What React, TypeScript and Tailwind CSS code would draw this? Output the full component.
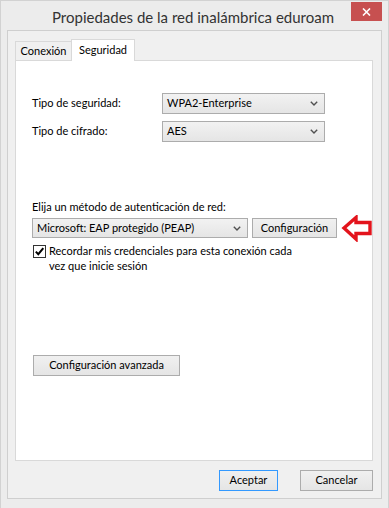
import React from "react";

function Chevron() {
  return (
    <svg width="8" height="5" viewBox="0 0 8 5" className="shrink-0">
      <path d="M0.8 0.8 L4 4 L7.2 0.8" fill="none" stroke="#505050" strokeWidth="1.4" />
    </svg>
  );
}

function Combo({ text, className }: { text: string; className: string }) {
  return (
    <div
      className={
        "flex items-center justify-between border border-[#acacac] bg-gradient-to-b from-[#f2f2f2] to-[#e5e5e5] pl-[4px] pr-[6px] " +
        className
      }
    >
      <span>{text}</span>
      <Chevron />
    </div>
  );
}

export default function App() {
  return (
    <div
      className="w-[389px] h-[508px] flex flex-col bg-[#ececec] border-l border-t border-r border-[#d2d2d2] text-[11px] text-black overflow-hidden"
      style={{ fontFamily: "Lato, 'Liberation Sans', sans-serif" }}
    >
      {/* Title bar */}
      <div className="relative h-[29px] flex items-center justify-center shrink-0">
        <span className="text-[15px] text-[#333333] mt-[3px] ml-[-3px]">
          Propiedades de la red inalámbrica eduroam
        </span>
        <div className="absolute right-[6px] top-[1px] w-[31px] h-[19px] bg-[#c75050] flex items-center justify-center">
          <svg width="9" height="8" viewBox="0 0 9 8">
            <path d="M1 0.5 L8 7.5 M8 0.5 L1 7.5" stroke="#ffffff" strokeWidth="1.6" />
          </svg>
        </div>
      </div>

      {/* Client area */}
      <div className="ml-[6px] w-[375px] h-[469px] border border-[#cfcfcf] bg-[#f0f0f0] pl-[7px] pt-[8px] flex flex-col shrink-0">
        {/* Tabs */}
        <div className="flex items-end h-[21px]">
          <div className="w-[57px] h-[19px] border-l border-t border-r border-[#d9d9d9] bg-[#f0f0f0] flex items-center justify-center">
            Conexión
          </div>
          <div className="relative z-10 -ml-[1px] -mb-[1px] w-[64px] h-[22px] border-l border-t border-r border-[#d9d9d9] bg-white flex items-start justify-center pt-[2px]">
            Seguridad
          </div>
        </div>

        {/* Panel */}
        <div className="w-[358px] h-[401px] border border-[#d9d9d9] bg-white flex flex-col pt-[32px] pl-[16px]">
          <div className="flex items-center h-[21px]">
            <span className="w-[130px]">Tipo de seguridad:</span>
            <Combo text="WPA2-Enterprise" className="w-[163px] h-[21px]" />
          </div>
          <div className="flex items-center h-[21px] mt-[7px]">
            <span className="w-[130px]">Tipo de cifrado:</span>
            <Combo text="AES" className="w-[163px] h-[21px]" />
          </div>

          <div className="mt-[57px] h-[15px] leading-[15px]">
            Elija un método de autenticación de red:
          </div>
          <div className="mt-[4px] flex items-center h-[20px]">
            <Combo text="Microsoft: EAP protegido (PEAP)" className="w-[216px] h-[20px]" />
            <div className="ml-[4px] w-[85px] h-[20px] border border-[#acacac] bg-gradient-to-b from-[#f0f0f0] to-[#e5e5e5] flex items-center justify-center">
              Configuración
            </div>
            <svg width="31" height="27" viewBox="0 0 31 27" className="ml-[4px] shrink-0">
              <polygon
                points="3,13 15,2.5 15,7.5 29,7.5 29,18.5 15,18.5 15,24"
                fill="#ffffff"
                stroke="#e3141c"
                strokeWidth="3.4"
                strokeLinejoin="miter"
              />
            </svg>
          </div>

          <div className="mt-[5px] ml-[1px] flex items-start">
            <div className="mt-[2px] w-[13px] h-[13px] border border-[#333333] bg-white flex items-center justify-center shrink-0">
              <svg width="11" height="11" viewBox="0 0 11 11">
                <path d="M1.8 5.6 L4.3 8.2 L9.3 2.2" fill="none" stroke="#000000" strokeWidth="2" />
              </svg>
            </div>
            <div className="ml-[3px] leading-[15px]">
              Recordar mis credenciales para esta conexión cada
              <br />
              vez que inicie sesión
            </div>
          </div>

          <div className="mt-[82px] ml-[1px] w-[147px] h-[21px] border border-[#acacac] bg-gradient-to-b from-[#f0f0f0] to-[#e5e5e5] flex items-center justify-center">
            Configuración avanzada
          </div>
        </div>

        {/* Bottom buttons */}
        <div className="mt-[9px] flex justify-end pr-[8px]">
          <div className="w-[59px] h-[21px] border border-[#3399ff] bg-gradient-to-b from-[#f0f0f0] to-[#e5e5e5] flex items-center justify-center">
            Aceptar
          </div>
          <div className="ml-[22px] w-[73px] h-[21px] border border-[#acacac] bg-gradient-to-b from-[#f0f0f0] to-[#e5e5e5] flex items-center justify-center">
            Cancelar
          </div>
        </div>
      </div>
    </div>
  );
}
